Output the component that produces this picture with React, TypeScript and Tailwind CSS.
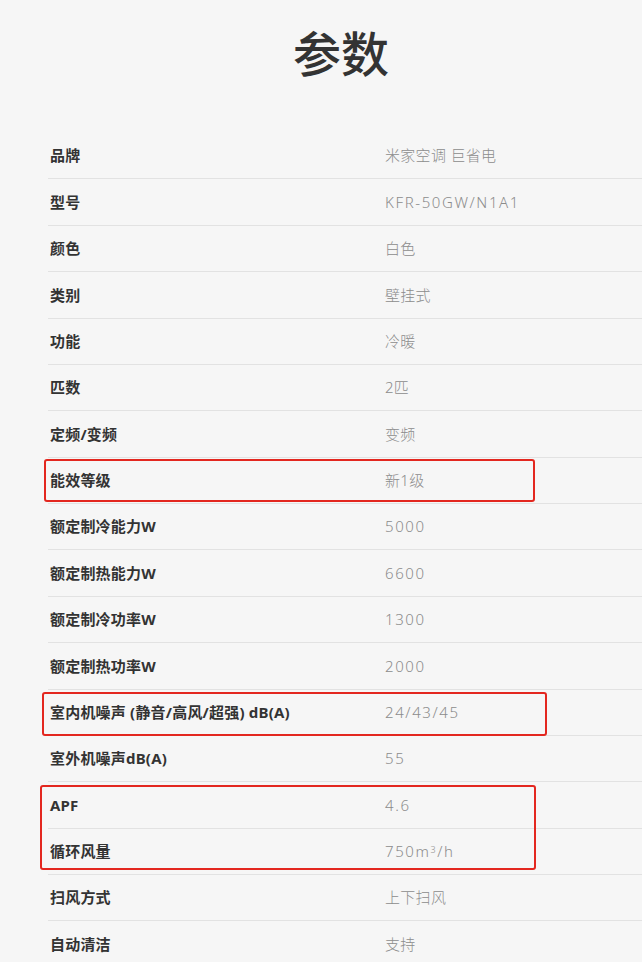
import React from 'react';

// wide: value is latin/digits, spaced out a little like the original font
const specs: { label: string; value: React.ReactNode; wide?: boolean }[] = [
  { label: '品牌', value: '米家空调 巨省电' },
  { label: '型号', value: 'KFR-50GW/N1A1', wide: true },
  { label: '颜色', value: '白色' },
  { label: '类别', value: '壁挂式' },
  { label: '功能', value: '冷暖' },
  { label: '匹数', value: '2匹' },
  { label: '定频/变频', value: '变频' },
  { label: '能效等级', value: '新1级' },
  { label: '额定制冷能力W', value: '5000', wide: true },
  { label: '额定制热能力W', value: '6600', wide: true },
  { label: '额定制冷功率W', value: '1300', wide: true },
  { label: '额定制热功率W', value: '2000', wide: true },
  { label: '室内机噪声 (静音/高风/超强) dB(A)', value: '24/43/45', wide: true },
  { label: '室外机噪声dB(A)', value: '55', wide: true },
  { label: 'APF', value: '4.6', wide: true },
  {
    label: '循环风量',
    value: (
      <>
        750m<sup className="text-[9px]">3</sup>/h
      </>
    ),
    wide: true,
  },
  { label: '扫风方式', value: '上下扫风' },
  { label: '自动清洁', value: '支持' },
];

const App = () => {
  return (
    <div
      className="h-[962px] overflow-hidden bg-[#f6f6f6]"
      style={{ fontFamily: '"Noto Sans", "Noto Sans CJK SC", sans-serif' }}
    >
      <div className="h-[133px] pt-[22px] pl-[40px] flex justify-center">
        <h1 className="text-[48px] leading-[64px] font-medium text-[#333]">参数</h1>
      </div>

      <div className="relative pl-[48px]">
        {specs.map((s, i) => (
          <div
            key={i}
            className="h-[46.375px] flex items-center border-b border-[#e2e2e2]"
          >
            <div className="w-[337px] pl-[2px] text-[15px] font-bold text-[#333] whitespace-nowrap tracking-[0.2px]">
              {s.label}
            </div>
            <div
              className={
                s.wide
                  ? 'text-[15px] font-light text-[#8c8c8c] tracking-[1.6px]'
                  : 'text-[15px] font-light text-[#8c8c8c] tracking-[0.3px]'
              }
            >
              {s.value}
            </div>
          </div>
        ))}

        {/* annotation boxes drawn over the table */}
        <div className="absolute left-[44px] top-[326px] w-[491px] h-[43px] border-[2.5px] border-[#e3271f] rounded-[3px]" />
        <div className="absolute left-[42px] top-[559px] w-[505px] h-[44px] border-[2.5px] border-[#e3271f] rounded-[3px]" />
        <div className="absolute left-[40px] top-[652px] w-[496px] h-[85px] border-[2.5px] border-[#e3271f] rounded-[3px]" />
      </div>
    </div>
  );
};

export default App;
